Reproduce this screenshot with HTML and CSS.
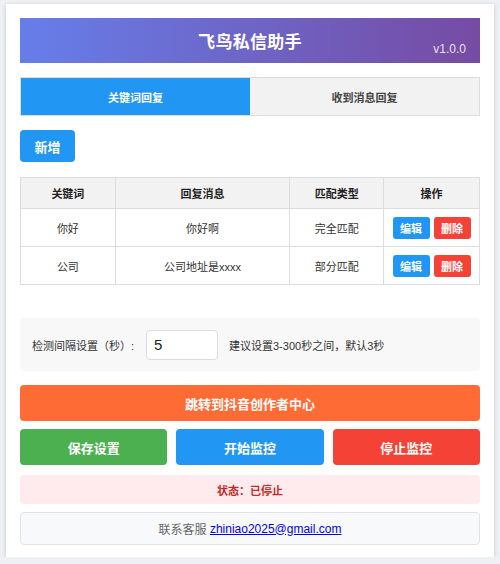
FILE: index.html
```html
<!DOCTYPE html>
<html lang="zh-CN">
<head>
<meta charset="utf-8">
<link rel="stylesheet" href="styles.css">
</head>
<body>
<div class="popup">
  <div class="header">
    <h1 class="title">飞鸟私信助手</h1>
    <span class="version">v1.0.0</span>
  </div>
  <div class="tabs">
    <div class="tab active">关键词回复</div>
    <div class="tab">收到消息回复</div>
  </div>
  <button class="btn-add">新增</button>
  <table class="rules">
    <thead>
      <tr><th class="c1">关键词</th><th class="c2">回复消息</th><th class="c3">匹配类型</th><th class="c4">操作</th></tr>
    </thead>
    <tbody>
      <tr><td>你好</td><td>你好啊</td><td>完全匹配</td><td><span class="ops"><button class="mini edit">编辑</button><button class="mini del">删除</button></span></td></tr>
      <tr><td>公司</td><td>公司地址是xxxx</td><td>部分匹配</td><td><span class="ops"><button class="mini edit">编辑</button><button class="mini del">删除</button></span></td></tr>
    </tbody>
  </table>
  <div class="settings">
    <span class="label">检测间隔设置（秒）:</span>
    <input class="interval" type="text" value="5">
    <span class="hint">建议设置3-300秒之间，默认3秒</span>
  </div>
  <button class="btn-wide">跳转到抖音创作者中心</button>
  <div class="actions">
    <button class="act save">保存设置</button>
    <button class="act start">开始监控</button>
    <button class="act stop">停止监控</button>
  </div>
  <div class="status">状态：已停止</div>
  <div class="contact">联系客服 <a href="#">zhiniao2025@gmail.com</a></div>
</div>
</body>
</html>
```

FILE: styles.css
```css
* { box-sizing: border-box; }
body {
  margin: 0;
  background: #eef0f3;
  font-family: "Liberation Sans", "Noto Sans CJK SC", sans-serif;
  color: #333;
}
.popup {
  margin: 4px 6px 0;
  width: 488px;
  background: #fff;
  padding: 14px 14px 12px;
  box-shadow: 0 1px 4px rgba(0,0,0,0.18);
}
.header {
  position: relative;
  height: 45px;
  background: linear-gradient(90deg, #667eea 0%, #764ba2 100%);
  display: flex;
  align-items: center;
  justify-content: center;
}
.title {
  margin: 0;
  font-size: 17px;
  font-weight: bold;
  color: #fff;
  letter-spacing: 0.3px;
}
.version {
  position: absolute;
  right: 14px;
  bottom: 7px;
  font-size: 12px;
  color: rgba(255,255,255,0.85);
}
.tabs {
  display: flex;
  margin-top: 14px;
  height: 39px;
  border: 1px solid #ddd;
}
.tab {
  flex: 1;
  display: flex;
  align-items: center;
  justify-content: center;
  font-size: 11px;
  font-weight: bold;
  background: #f2f2f2;
  color: #444;
}
.tab.active {
  background: #2196f3;
  color: #fff;
}
button {
  font-family: inherit;
  border: none;
  cursor: pointer;
}
.btn-add {
  display: block;
  margin-top: 14px;
  width: 55px;
  height: 32px;
  background: #2196f3;
  color: #fff;
  font-size: 13px;
  font-weight: bold;
  border-radius: 4px;
}
.rules {
  margin-top: 15px;
  width: 100%;
  border-collapse: collapse;
  font-size: 11px;
}
.rules th, .rules td {
  border: 1px solid #ddd;
  text-align: center;
  padding: 0;
}
.rules th {
  height: 31px;
  background: #f2f2f2;
  font-weight: bold;
  color: #222;
}
.rules td {
  height: 38px;
  color: #333;
}
.c1 { width: 95px; }
.c2 { width: 175px; }
.c3 { width: 94px; }
.c4 { width: 96px; }
.ops {
  display: flex;
  justify-content: center;
  gap: 4px;
}
.mini {
  width: 37px;
  height: 22px;
  border-radius: 3px;
  color: #fff;
  font-size: 11px;
  font-weight: bold;
}
.edit { background: #2196f3; }
.del { background: #f44336; }
.settings {
  margin-top: 33px;
  height: 53px;
  background: #f8f8f8;
  border-radius: 4px;
  display: flex;
  align-items: center;
  padding-left: 12px;
  font-size: 11px;
  color: #333;
}
.label { width: 114px; }
.interval {
  width: 72px;
  height: 30px;
  border: 1px solid #ddd;
  border-radius: 4px;
  padding: 0 7px;
  font-size: 15px;
  font-family: inherit;
  color: #222;
  background: #fff;
  margin-right: 11px;
}
.btn-wide {
  display: block;
  width: 100%;
  margin-top: 14px;
  height: 36px;
  background: #ff6b35;
  color: #fff;
  font-size: 13px;
  font-weight: bold;
  border-radius: 4px;
}
.actions {
  display: flex;
  gap: 9px;
  margin-top: 8px;
}
.act {
  flex: 1;
  height: 36px;
  border-radius: 4px;
  color: #fff;
  font-size: 13px;
  font-weight: bold;
}
.save { background: #4caf50; }
.start { background: #2196f3; }
.stop { background: #f44336; }
.status {
  margin-top: 10px;
  height: 29px;
  background: #ffebee;
  border-radius: 4px;
  display: flex;
  align-items: center;
  justify-content: center;
  font-size: 11px;
  font-weight: bold;
  color: #c62828;
}
.contact {
  margin-top: 8px;
  height: 33px;
  background: #f8f9fa;
  border: 1px solid #e3e3e3;
  border-radius: 4px;
  display: flex;
  align-items: center;
  justify-content: center;
  font-size: 12px;
  color: #666;
  white-space: pre;
}
.contact a { color: #0000ee; text-decoration: underline; }
```
